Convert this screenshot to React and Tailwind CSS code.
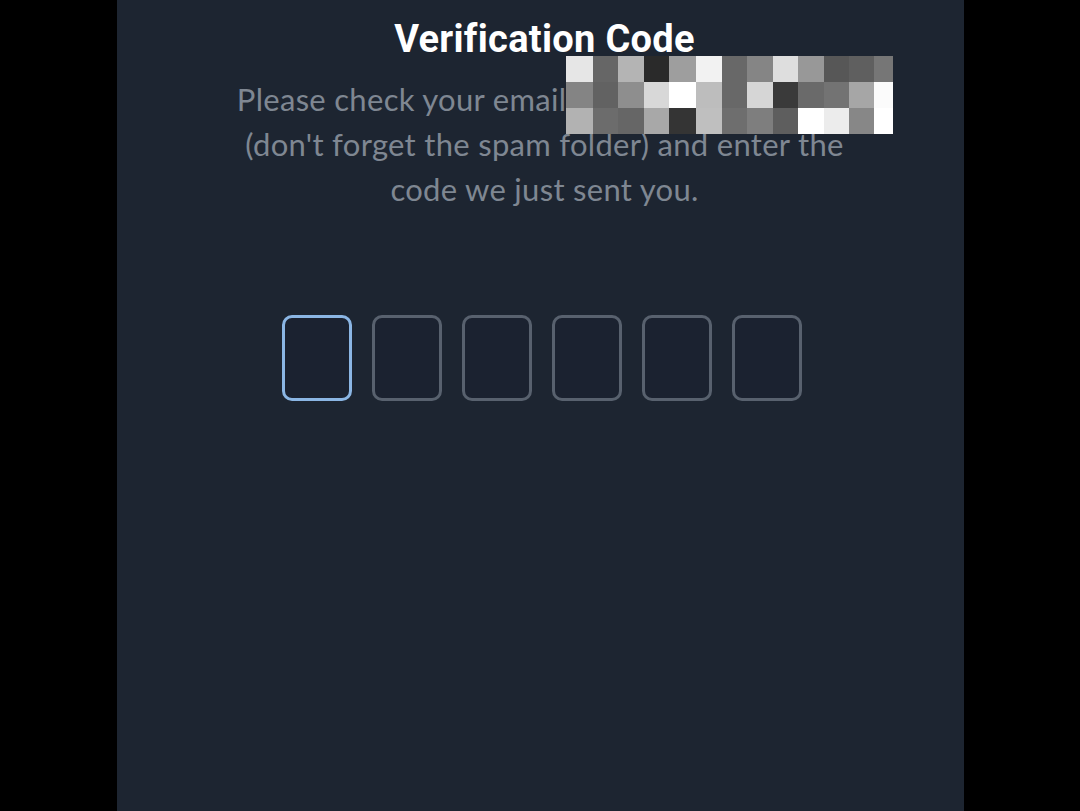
import React from "react";

const rows = [
  ["#e6e6e6", "#666666", "#b4b4b4", "#2a2a2a", "#9e9e9e", "#f2f2f2", "#686868", "#858585", "#dedede", "#989898", "#575757", "#5f5f5f", "#767676"],
  ["#848484", "#626262", "#8e8e8e", "#d8d8d8", "#ffffff", "#bdbdbd", "#686868", "#d6d6d6", "#3a3a3a", "#6a6a6a", "#737373", "#a6a6a6", "#fbfbfb"],
  ["#b2b2b2", "#6c6c6c", "#666666", "#a8a8a8", "#343434", "#bfbfbf", "#6e6e6e", "#7e7e7e", "#5e5e5e", "#ffffff", "#ececec", "#878787", "#ffffff"],
];
const widths = [27, 25, 26, 25, 27, 26, 25, 26, 25, 26, 25, 25, 19];

export default function App() {
  return (
    <div className="w-[1080px] h-[811px] bg-black flex justify-center overflow-hidden">
      <div className="relative w-[847px] h-full bg-[#1d2531] flex flex-col items-center pt-[17px] pl-[9px]">
        <h1
          className="text-[38px] leading-[44px] font-bold tracking-[0.3px] text-white whitespace-nowrap"
          style={{ fontFamily: "Roboto, 'Liberation Sans', sans-serif" }}
        >
          Verification Code
        </h1>
        <p
          className="mt-[16px] text-center text-[31px] leading-[45px] tracking-[0.3px] text-[#7f8792] w-[700px]"
          style={{ fontFamily: "Lato, 'Open Sans', sans-serif" }}
        >
          Please check your email <span className="tracking-[-0.3px]">yourname@mail.com</span>
          <br />
          (don't forget the spam folder) and enter the
          <br />
          code we just sent you.
        </p>
        <div className="mt-[103px] mr-[6px] flex gap-[20px]">
          {[0, 1, 2, 3, 4, 5].map((i) => (
            <div
              key={i}
              className={
                i === 0
                  ? "w-[70px] h-[86px] rounded-[10px] border-[3px] border-[#8bb6e4] bg-[#1b2230]"
                  : "w-[70px] h-[86px] rounded-[10px] border-[3px] border-[#58616e] bg-[#1b2230]"
              }
            />
          ))}
        </div>
        <div className="absolute left-[449px] top-[56px] flex flex-col">
          {rows.map((r, ri) => (
            <div key={ri} className="flex h-[26px]">
              {r.map((c, ci) => (
                <div key={ci} className="h-full" style={{ backgroundColor: c, width: widths[ci] }} />
              ))}
            </div>
          ))}
        </div>
      </div>
    </div>
  );
}
